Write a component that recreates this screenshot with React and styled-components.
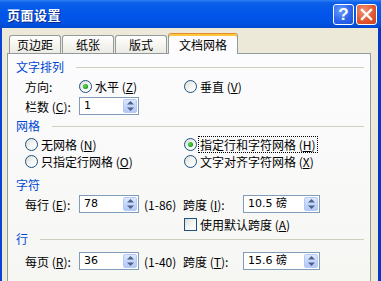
import React from 'react'
import styled, { createGlobalStyle } from 'styled-components'

const GlobalStyle = createGlobalStyle`
  html, body {
    margin: 0;
    padding: 0;
    background: #ece9d8;
    overflow: hidden;
  }
  body {
    font-family: "Noto Sans CJK SC", "DejaVu Sans", sans-serif;
    font-size: 12px;
    color: #000;
  }
`

const App = () => {
  return (
    <>
      <GlobalStyle />
      <Window>
        <TitleBar>
          <Title>页面设置</Title>
          <TitleButtons>
            <HelpButton>?</HelpButton>
            <CloseButton>
              <svg width="13" height="13" viewBox="0 0 13 13">
                <path d="M2 2 L11 11 M11 2 L2 11" stroke="#fff" strokeWidth="2.4" strokeLinecap="square" />
              </svg>
            </CloseButton>
          </TitleButtons>
        </TitleBar>

        <Frame>
          <Tabs>
            <Tab $w={52}>页边距</Tab>
            <Tab $w={52}>纸张</Tab>
            <Tab $w={52}>版式</Tab>
            <Tab $w={70} $active>文档网格</Tab>
          </Tabs>

          <Panel>
            <SectionHeader $mt={0}>
              <SectionLabel>文字排列</SectionLabel>
              <SectionLine />
            </SectionHeader>

            <Row $mt={3} $h={18}>
              <Cell>
                <FieldLabel>方向:</FieldLabel>
                <Radio $checked />
                <OptionText>水平 (<u>Z</u>)</OptionText>
              </Cell>
              <Cell $right>
                <Radio />
                <OptionText>垂直 (<u>V</u>)</OptionText>
              </Cell>
            </Row>

            <Row $mt={2} $h={18}>
              <Cell>
                <FieldLabel>栏数 (<u>C</u>):</FieldLabel>
                <Spinner $w={60} value="1" />
              </Cell>
            </Row>

            <SectionHeader $mt={4}>
              <SectionLabel>网格</SectionLabel>
              <SectionLine />
            </SectionHeader>

            <Row $mt={3} $h={17}>
              <Cell>
                <Radio />
                <OptionText>无网格 (<u>N</u>)</OptionText>
              </Cell>
              <Cell $right>
                <Radio $checked />
                <FocusText>指定行和字符网格 (<u>H</u>)</FocusText>
              </Cell>
            </Row>

            <Row $mt={0} $h={17}>
              <Cell>
                <Radio />
                <OptionText>只指定行网格 (<u>O</u>)</OptionText>
              </Cell>
              <Cell $right>
                <Radio />
                <OptionText>文字对齐字符网格 (<u>X</u>)</OptionText>
              </Cell>
            </Row>

            <SectionHeader $mt={8}>
              <SectionLabel>字符</SectionLabel>
            </SectionHeader>

            <Row $mt={3} $h={18}>
              <Cell>
                <FieldLabel>每行 (<u>E</u>):</FieldLabel>
                <Spinner $w={60} value="78" />
                <RangeText>(1-86)</RangeText>
              </Cell>
              <Cell>
                <FieldLabel $w={60}>跨度 (<u>I</u>):</FieldLabel>
                <Spinner $w={77} value="10.5 磅" />
              </Cell>
            </Row>

            <Row $mt={3} $h={16}>
              <Cell />
              <Cell $right>
                <Checkbox />
                <OptionText>使用默认跨度 (<u>A</u>)</OptionText>
              </Cell>
            </Row>

            <SectionHeader $mt={0}>
              <SectionLabel>行</SectionLabel>
              <SectionLine />
            </SectionHeader>

            <Row $mt={6} $h={17}>
              <Cell>
                <FieldLabel>每页 (<u>R</u>):</FieldLabel>
                <Spinner $w={60} value="36" />
                <RangeText>(1-40)</RangeText>
              </Cell>
              <Cell>
                <FieldLabel $w={60}>跨度 (<u>T</u>):</FieldLabel>
                <Spinner $w={77} value="15.6 磅" />
              </Cell>
            </Row>
          </Panel>
        </Frame>
      </Window>
    </>
  )
}

const Spinner = ({ $w, value }) => (
  <SpinBox $w={$w}>
    <SpinValue>{value}</SpinValue>
    <SpinButton>
      <svg width="9" height="12" viewBox="0 0 9 12">
        <path d="M1 4.5 L4.5 1 L8 4.5 Z" fill="#4d6185" />
        <path d="M1 7.5 L4.5 11 L8 7.5 Z" fill="#4d6185" />
      </svg>
    </SpinButton>
  </SpinBox>
)

export default App

const Window = styled.div`
  display: flex;
  flex-direction: column;
  width: 381px;
  height: 281px;
  overflow: hidden;
`

const TitleBar = styled.div`
  display: flex;
  align-items: center;
  justify-content: space-between;
  height: 28px;
  flex-shrink: 0;
  padding: 0 4px 0 7px;
  box-sizing: border-box;
  background: linear-gradient(
    to bottom,
    #2f7ff6 0%,
    #0b5fe8 10%,
    #0256ea 45%,
    #0153e4 80%,
    #0147cf 100%
  );
`

const Title = styled.div`
  color: #fff;
  font-weight: bold;
  font-size: 13px;
  letter-spacing: 0.5px;
  text-shadow: 1px 1px 0 #0a2a8a;
`

const TitleButtons = styled.div`
  display: flex;
  gap: 2px;
  margin-top: 1px;
`

const TitleBtn = styled.div`
  width: 21px;
  height: 21px;
  box-sizing: border-box;
  border: 1px solid #fff;
  border-radius: 3px;
  display: flex;
  align-items: center;
  justify-content: center;
`

const HelpButton = styled(TitleBtn)`
  background: radial-gradient(circle at 35% 30%, #6a9cf9 0%, #2c66ec 55%, #1a4fd6 100%);
  color: #fff;
  font-family: "Liberation Sans", Arial, sans-serif;
  font-weight: bold;
  font-size: 17px;
`

const CloseButton = styled(TitleBtn)`
  background: radial-gradient(circle at 35% 30%, #f19479 0%, #e2582f 55%, #c9401c 100%);
`

const Frame = styled.div`
  flex: 1;
  display: flex;
  flex-direction: column;
  background: #ece9d8;
  border-left: 2px solid #0842d6;
  border-right: 3px solid #0634c9;
  padding: 5px 7px 0 5px;
  min-height: 0;
`

const Tabs = styled.div`
  display: flex;
  align-items: flex-start;
  height: 20px;
  padding-left: 2px;
  gap: 1px;
`

const Tab = styled.div`
  position: relative;
  z-index: ${p => (p.$active ? 2 : 1)};
  width: ${p => p.$w}px;
  height: ${p => (p.$active ? 21 : 18)}px;
  margin-top: ${p => (p.$active ? 0 : 2)}px;
  box-sizing: border-box;
  display: flex;
  align-items: center;
  justify-content: center;
  border: 1px solid #919b9c;
  border-bottom: none;
  border-radius: 3px 3px 0 0;
  ${p =>
    p.$active
      ? `
    border-top: 1px solid #e68b2c;
    box-shadow: inset 0 2px 0 #ffc83c;
    background: #fcfcfe;
    padding-top: 1px;
  `
      : `
    background: linear-gradient(to bottom, #ffffff 0%, #f4f3ee 60%, #ebeae4 100%);
  `}
`

const Panel = styled.div`
  flex: 1;
  display: flex;
  flex-direction: column;
  border: 1px solid #919b9c;
  border-bottom: none;
  background: linear-gradient(to bottom, #fcfcfe 0%, #f6f6f3 100%);
  padding: 6px 6px 0 8px;
`

const SectionHeader = styled.div`
  display: flex;
  align-items: center;
  height: 14px;
  margin-top: ${p => p.$mt}px;
`

const SectionLabel = styled.span`
  color: #0046d5;
  font-size: 12px;
  line-height: 14px;
`

const SectionLine = styled.div`
  flex: 1;
  height: 1px;
  background: #d0d0bf;
  margin-left: 12px;
`

const Row = styled.div`
  display: grid;
  grid-template-columns: 158px 1fr;
  align-items: center;
  height: ${p => p.$h}px;
  margin-top: ${p => p.$mt}px;
  padding-left: 9px;
`

const Cell = styled.div`
  display: flex;
  align-items: center;
  padding-left: ${p => (p.$right ? 1 : 0)}px;
  white-space: nowrap;
`

const FieldLabel = styled.span`
  width: ${p => p.$w || 54}px;
  flex-shrink: 0;
`

const OptionText = styled.span`
  margin-left: 3px;
`

const FocusText = styled.span`
  margin-left: 2px;
  padding: 0 1px;
  outline: 1px dotted #000;
  outline-offset: 0;
  line-height: 15px;
`

const RangeText = styled.span`
  margin-left: 5px;
`

const Radio = styled.span`
  position: relative;
  width: 13px;
  height: 13px;
  box-sizing: border-box;
  border-radius: 50%;
  border: 1px solid #1c5180;
  background: linear-gradient(135deg, #dcdcd7 0%, #f6f6f4 55%, #ffffff 100%);
  flex-shrink: 0;

  &::after {
    content: '';
    display: ${p => (p.$checked ? 'block' : 'none')};
    position: absolute;
    left: 3px;
    top: 3px;
    width: 5px;
    height: 5px;
    border-radius: 50%;
    background: radial-gradient(circle at 40% 40%, #5fe25f 0%, #21a121 60%, #1a7e1a 100%);
  }
`

const Checkbox = styled.span`
  width: 13px;
  height: 13px;
  box-sizing: border-box;
  border: 1px solid #1c5180;
  background: linear-gradient(135deg, #dcdcd7 0%, #f6f6f4 55%, #ffffff 100%);
  flex-shrink: 0;
`

const SpinBox = styled.div`
  display: flex;
  align-items: stretch;
  width: ${p => p.$w}px;
  height: 18px;
  box-sizing: border-box;
  border: 1px solid #7f9db9;
  background: #fff;
  padding: 1px;
  flex-shrink: 0;
`

const SpinValue = styled.span`
  flex: 1;
  padding-left: 3px;
  font-family: "DejaVu Sans", "Noto Sans CJK SC", sans-serif;
  font-size: 11px;
  line-height: 14px;
`

const SpinButton = styled.div`
  width: 14px;
  display: flex;
  align-items: center;
  justify-content: center;
  box-sizing: border-box;
  border: 1px solid #b6c8f3;
  border-radius: 2px;
  background: linear-gradient(to bottom, #dde8fe 0%, #c4d6fc 50%, #b4c8f6 100%);
`
